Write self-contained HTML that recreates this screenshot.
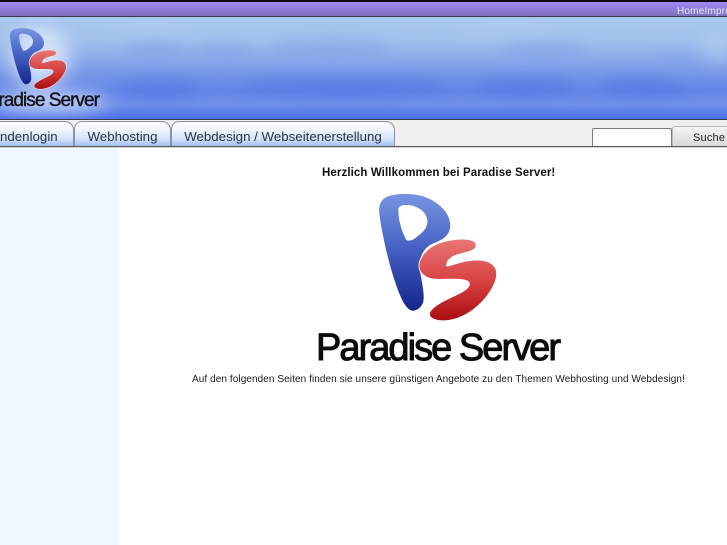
<!DOCTYPE html>
<html lang="de"><head><meta charset="utf-8"><title>Paradise Server</title>
<style>
html,body{margin:0;padding:0;background:#fff}
#w{position:relative;width:727px;height:545px;overflow:hidden;background:#fff;font-family:"Liberation Sans",sans-serif;color:#111}
#w>*{position:absolute}
.t{white-space:nowrap}
.tab{top:121px;height:25px;box-sizing:border-box;border:1px solid #8a93a3;border-bottom:0;border-radius:0 9px 0 0;background:linear-gradient(#fbfcff 0,#f0f4fd 35%,#d3e2fa 70%,#a3c1f3 100%);font-size:13.3px;line-height:29px;color:#2b3344;text-align:center;white-space:nowrap;overflow:hidden}
</style></head><body><div id="w">
<div style="left:0;top:0;width:727px;height:2px;background:#0c0a14"></div>
<div style="left:0;top:2px;width:727px;height:14px;background:linear-gradient(#a08cf5,#7d70bc)"></div>
<div style="left:0;top:16px;width:727px;height:1px;background:#3b3850"></div>
<div class="t" style="left:677px;top:5px;font-size:10px;line-height:14px;color:#e6e8fc;letter-spacing:.2px">HomeImpressum</div>

<svg style="left:0;top:17px" width="727" height="102" viewBox="0 0 727 102">
<defs>
<linearGradient id="bg" x1="0" y1="0" x2="0" y2="1"><stop offset="0" stop-color="#a9c8ee"/><stop offset=".22" stop-color="#a2c1ec"/><stop offset=".42" stop-color="#8aa9ea"/><stop offset=".58" stop-color="#7394e6"/><stop offset=".72" stop-color="#6485e6"/><stop offset=".86" stop-color="#7290ea"/><stop offset="1" stop-color="#4a6ee6"/></linearGradient>
<filter id="b8" x="-40%" y="-100%" width="180%" height="300%"><feGaussianBlur stdDeviation="8"/></filter>
<filter id="b14" x="-30%" y="-60%" width="160%" height="220%"><feGaussianBlur stdDeviation="9"/></filter>
<linearGradient id="pg" x1="0" y1="0" x2="0" y2="1"><stop offset="0" stop-color="#7895e2"/><stop offset=".45" stop-color="#4663c4"/><stop offset="1" stop-color="#14248a"/></linearGradient>
<linearGradient id="sg" gradientUnits="userSpaceOnUse" x1="0" y1="150" x2="0" y2="392"><stop offset="0" stop-color="#e87676"/><stop offset=".5" stop-color="#d84242"/><stop offset="1" stop-color="#a80e10"/></linearGradient>
<g id="ps">
<path fill="url(#pg)" fill-rule="evenodd" d="M125 362C105 355 90 320 75 275C55 215 35 130 28 70C25 40 35 22 65 16C100 8 150 10 185 30C225 52 245 85 240 115C235 140 215 150 190 160C165 170 150 195 148 225C150 260 165 300 160 335C155 352 140 364 125 362ZM85 60C85 90 95 125 108 148C112 155 125 152 135 145C155 130 175 115 172 90C168 60 135 45 110 45C95 45 85 48 85 60Z"/>
<path fill="#fff" stroke="#fff" stroke-width="10" stroke-opacity=".85" d="M315 163C310 148 270 148 235 155C195 163 165 180 152 215C145 240 160 258 185 263C220 268 275 258 297 272C310 285 295 300 270 313C240 328 195 345 182 368C178 385 205 392 235 388C290 380 345 335 370 280C385 245 375 222 340 215C300 208 260 225 232 232C222 230 225 212 245 198C265 185 320 185 315 163Z"/>
<path fill="url(#sg)" stroke="url(#sg)" stroke-width="4" d="M315 163C310 148 270 148 235 155C195 163 165 180 152 215C145 240 160 258 185 263C220 268 275 258 297 272C310 285 295 300 270 313C240 328 195 345 182 368C178 385 205 392 235 388C290 380 345 335 370 280C385 245 375 222 340 215C300 208 260 225 232 232C222 230 225 212 245 198C265 185 320 185 315 163Z"/>
</g>
</defs>
<rect width="727" height="102" fill="url(#bg)"/>
<g filter="url(#b8)" fill="#7ea2e6" opacity=".55">
<ellipse cx="155" cy="34" rx="32" ry="10"/><ellipse cx="330" cy="32" rx="60" ry="10"/><ellipse cx="545" cy="34" rx="42" ry="9"/><ellipse cx="675" cy="50" rx="24" ry="11"/><ellipse cx="225" cy="35" rx="30" ry="8"/>
</g>
<g filter="url(#b8)" fill="#4a6fe2" opacity=".6">
<ellipse cx="160" cy="72" rx="40" ry="7"/><ellipse cx="345" cy="70" rx="105" ry="7"/><ellipse cx="525" cy="70" rx="50" ry="7"/><ellipse cx="645" cy="70" rx="45" ry="7"/>
</g>
<g filter="url(#b8)" fill="#b6d2f0" opacity=".55">
<ellipse cx="150" cy="8" rx="50" ry="6"/><ellipse cx="510" cy="8" rx="60" ry="6"/><ellipse cx="718" cy="30" rx="16" ry="14"/>
</g>
<g filter="url(#b14)" fill="#e0edfb" opacity=".8">
<ellipse cx="40" cy="40" rx="30" ry="30"/><ellipse cx="50" cy="85" rx="58" ry="9"/>
</g>
<g transform="translate(5.5 9.4) scale(.16)"><use href="#ps"/></g>
<text x="-23" y="89" font-family="Liberation Sans" font-size="19" fill="#15151c" stroke="#15151c" stroke-width=".4" textLength="123" lengthAdjust="spacing">Paradise Server</text>
</svg>

<div style="left:0;top:119px;width:727px;height:1px;background:#39404f"></div>
<div style="left:0;top:120px;width:727px;height:26px;background:#efefef"></div>

<div class="tab" style="left:-40px;width:114px"><span style="position:absolute;left:39px;top:0">ndenlogin</span></div>
<div class="tab" style="left:74px;width:97px;border-radius:8px 9px 0 0">Webhosting</div>
<div class="tab" style="left:171px;width:224px;border-radius:8px 9px 0 0">Webdesign / Webseitenerstellung</div>

<div style="left:592px;top:128px;width:80px;height:19px;box-sizing:border-box;background:#fff;border:1px solid #7c7c7c;border-bottom:0;border-radius:2px 2px 0 0"></div>
<div class="t" style="left:672px;top:126px;width:70px;height:21px;box-sizing:border-box;border:1px solid #bbb;border-bottom:0;border-radius:3px 0 0 0;background:linear-gradient(#f4f4f4,#d8d8d8);font-size:11px;line-height:23px;padding-left:20px;color:#222;letter-spacing:.2px">Suche</div>
<div style="left:0;top:146px;width:727px;height:1px;background:#5a5a5a"></div>
<div style="left:0;top:147px;width:727px;height:1px;background:#d5d5d5"></div>

<div style="left:0;top:148px;width:119px;height:397px;background:#f1f7ff"></div>

<div class="t" style="left:322px;top:166px;font-size:11.5px;line-height:15px;font-weight:bold;letter-spacing:.1px;color:#111">Herzlich Willkommen bei Paradise Server!</div>

<svg style="left:300px;top:160px" width="280" height="205" viewBox="0 0 280 205">
<g transform="translate(70 30) scale(.3333)"><use href="#ps"/></g>
<text x="16" y="200" font-family="Liberation Sans" font-size="38" fill="#0c0c0c" stroke="#0c0c0c" stroke-width="1" textLength="245" lengthAdjust="spacing">Paradise Server</text>
</svg>

<div class="t" style="left:192px;top:371px;font-size:10px;line-height:14px;color:#1a1a1a;letter-spacing:.08px;transform:translateY(2px)">Auf den folgenden Seiten finden sie unsere günstigen Angebote zu den Themen Webhosting und Webdesign!</div>
</div></body></html>
